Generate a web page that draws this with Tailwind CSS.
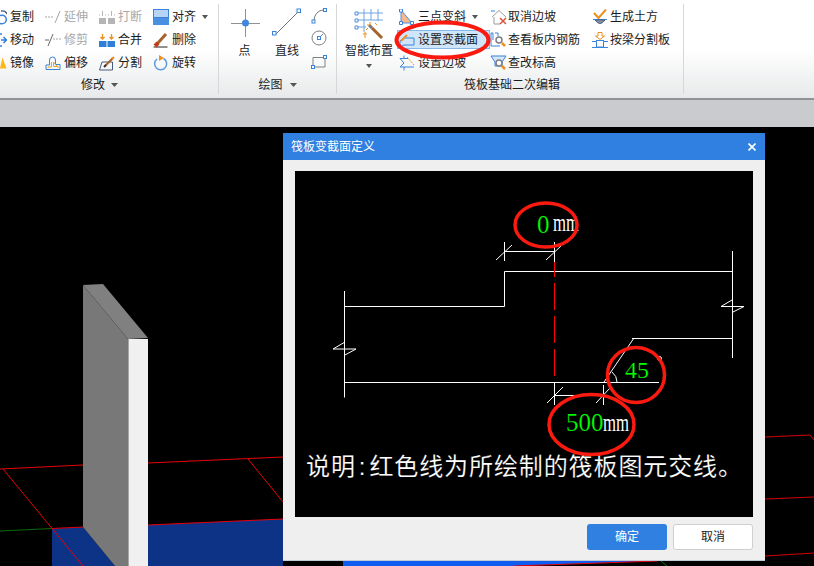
<!DOCTYPE html>
<html lang="en">
  <head>
    <meta charset="UTF-8" />
    <title>筏板变截面定义</title>
    <script src="https://cdn.jsdelivr.net/npm/@tailwindcss/browser@4"></script>
  </head>
  <body class="w-[814px] h-[566px] overflow-hidden bg-black font-['Liberation_Sans','Noto_Sans_CJK_SC',sans-serif] text-[12px] text-[#1c1c1c]">
    <div class="relative w-[814px] h-[566px] overflow-hidden flex flex-col">
      <!-- ribbon -->
      <div class="h-[100px] shrink-0 flex border-b-2 border-[#8f9296] bg-gradient-to-b from-white via-white to-[#e7e9ea]">
        <!-- 修改 -->
        <div class="w-[219px] shrink-0 border-r border-[#d5d7d9] my-1 flex flex-col overflow-hidden">
          <div class="h-[74px] pt-px grid grid-cols-[54px_54px_54px_70px] grid-rows-[23px_23px_23px] -ml-[9px] whitespace-nowrap">
            <div class="flex items-center gap-[3px]">
              <svg class="w-4 h-4 shrink-0" viewBox="0 0 16 16" fill="none"><path d="M10 2a5 5 0 0 1 6 3" stroke="#3d5d86" stroke-width="1.3"/><circle cx="11" cy="10.5" r="4.3" stroke="#3a83d8" stroke-width="1.5"/></svg>复制
            </div>
            <div class="flex items-center gap-[3px] text-[#a8a8a8]">
              <svg class="w-4 h-4 shrink-0" viewBox="0 0 16 16" fill="none"><path d="M0 8h9" stroke="#a5a5a5" stroke-dasharray="2 1"/><path d="M10 14 15 2" stroke="#a5a5a5"/></svg>延伸
            </div>
            <div class="flex items-center gap-[3px] text-[#a8a8a8]">
              <svg class="w-4 h-4 shrink-0" viewBox="0 0 16 16" fill="#b5b5b5"><rect x="0" y="9" width="7" height="6"/><rect x="9" y="9" width="7" height="6"/><path d="M3.5 2v5M12.5 2v5M0 6h1M6 6h1M9 6h1M15 6h1" stroke="#b5b5b5"/></svg>打断
            </div>
            <div class="flex items-center gap-[3px]">
              <svg class="w-4 h-4 shrink-0" viewBox="0 0 16 16"><rect x="0.5" y="0.5" width="15" height="8" fill="#b8d4f4" stroke="#3a83d8"/><rect x="0" y="9" width="16" height="7" fill="#4a90e2"/></svg>对齐
              <svg class="w-[6px] h-1 ml-[3px]" viewBox="0 0 6 4"><path d="M0 0H6L3 4z" fill="#555"/></svg>
            </div>

            <div class="flex items-center gap-[3px]">
              <svg class="w-4 h-4 shrink-0" viewBox="0 0 16 16" fill="none" stroke="#2f7ed8" stroke-width="1.5"><path d="M10 8h5M12.5 5l3 3-3 3M9 2h2M9 14h2"/></svg>移动
            </div>
            <div class="flex items-center gap-[3px] text-[#a8a8a8]">
              <svg class="w-4 h-4 shrink-0" viewBox="0 0 16 16" fill="none"><path d="M0 8h4M3 14 8 2" stroke="#666"/><path d="M8 7h8" stroke="#a5a5a5" stroke-dasharray="2 1"/></svg>修剪
            </div>
            <div class="flex items-center gap-[3px]">
              <svg class="w-4 h-4 shrink-0" viewBox="0 0 16 16"><rect x="0" y="9" width="7.5" height="6" fill="#2f7ed8"/><rect x="8.5" y="9" width="7.5" height="6" fill="#2f7ed8"/><path d="M3.5 2v5M1.5 5l2 2 2-2M12.5 2v5M10.5 5l2 2 2-2" stroke="#ef8f1d" fill="none" stroke-width="1.3"/></svg>合并
            </div>
            <div class="flex items-center gap-[3px]">
              <svg class="w-4 h-4 shrink-0" viewBox="0 0 16 16" fill="none"><path d="M14.5 15H0.5" stroke="#222"/><path d="M4 12 13 2" stroke="#a4622c" stroke-width="3"/><path d="M2 14 5 11" stroke="#c33c16" stroke-width="4"/></svg>删除
            </div>

            <div class="flex items-center gap-[3px]">
              <svg class="w-4 h-4 shrink-0" viewBox="0 0 16 16"><path d="M11.5 2.5 15.5 13.5H9z" fill="#fdb813"/></svg>镜像
            </div>
            <div class="flex items-center gap-[3px]">
              <svg class="w-4 h-4 shrink-0" viewBox="0 0 16 16" fill="none"><path d="M1 14.5V10H4.5V5a3 3 0 0 1 6 0V9.5H15v5z" stroke="#3a83d8"/><path d="M3 12.5V12H6.5V7M8.500 7V11.500H13v1z" stroke="#f2a51f"/></svg>偏移
            </div>
            <div class="flex items-center gap-[3px]">
              <svg class="w-4 h-4 shrink-0" viewBox="0 0 16 16" fill="none"><path d="M0.5 15 3 7H13.5V15z" stroke="#4a5a80"/><path d="M6 11 14 3" stroke="#a4622c" stroke-width="2"/><path d="M5 12 7 10" stroke="#333" stroke-width="2"/><path d="M13 4 15 2" stroke="#ef8f1d" stroke-width="2"/></svg>分割
            </div>
            <div class="flex items-center gap-[3px]">
              <svg class="w-4 h-4 shrink-0" viewBox="0 0 16 16" fill="none"><path d="M10.5 3.5A6 6 0 1 1 4 4" stroke="#5a9be0" stroke-width="1.5"/><path d="M6 0 11 3 6 6z" fill="#ef8f1d"/></svg>旋转
            </div>
          </div>
          <div class="h-[18px] flex items-center justify-center gap-[6px] pr-[19px]">修改<svg class="w-[7px] h-1" viewBox="0 0 7 4"><path d="M0 0H7L3.5 4z" fill="#555"/></svg></div>
        </div>

        <!-- 绘图 -->
        <div class="w-[118px] shrink-0 border-r border-[#d5d7d9] my-1 flex flex-col">
          <div class="h-[74px] flex whitespace-nowrap">
            <div class="w-[51px] flex flex-col items-center pt-1">
              <svg class="w-[30px] h-[30px] mb-1" viewBox="0 0 30 30" fill="none"><path d="M15.5 1V29M1 15.5H30" stroke="#8d9298"/><circle cx="15.5" cy="15" r="3.5" fill="#3f88dc"/></svg>
              点
            </div>
            <div class="w-[34px] flex flex-col items-center pt-1">
              <svg class="w-[30px] h-[30px] mb-1" viewBox="0 0 30 30" fill="none"><path d="M4 26 26 4" stroke="#6f7378"/><rect x="0.5" y="23.5" width="3.5" height="3.5" fill="#fff" stroke="#3a83d8"/><rect x="25" y="1" width="3.5" height="3.5" fill="#fff" stroke="#3a83d8"/></svg>
              直线
            </div>
            <div class="pl-[7px] flex flex-col pt-[4px] gap-[6px]">
              <svg class="w-4 h-4" viewBox="0 0 16 16" fill="none"><path d="M3 13C3 7 7 2 13 2" stroke="#6f7378"/><rect x="1" y="12" width="3" height="3" fill="#fff" stroke="#3a83d8"/><rect x="12.5" y="0.5" width="3" height="3" fill="#fff" stroke="#3a83d8"/></svg>
              <svg class="w-4 h-4" viewBox="0 0 16 16" fill="none"><circle cx="8" cy="8" r="7" stroke="#7c8086"/><path d="M8 8 12 4" stroke="#7c8086"/><rect x="6.5" y="6.5" width="3" height="3" fill="#fff" stroke="#3a83d8"/></svg>
              <svg class="w-4 h-4 mt-[1px]" viewBox="0 0 16 16" fill="none"><path d="M2 4.5H14V14H2z" stroke="#7c8086"/><rect x="0.5" y="12.5" width="3" height="3" fill="#fff" stroke="#3a83d8"/><rect x="12.5" y="2.5" width="3" height="3" fill="#fff" stroke="#3a83d8"/></svg>
            </div>
          </div>
          <div class="h-[18px] flex items-center justify-center gap-[7px]">绘图<svg class="w-[7px] h-1" viewBox="0 0 7 4"><path d="M0 0H7L3.5 4z" fill="#555"/></svg></div>
        </div>

        <!-- 筏板基础二次编辑 -->
        <div class="w-[347px] shrink-0 border-r border-[#d5d7d9] my-1 flex flex-col">
          <div class="h-[74px] flex whitespace-nowrap">
            <div class="ml-2 w-12 flex flex-col items-center pt-1">
              <svg class="w-[30px] h-8 mb-[2px]" viewBox="0 0 30 32" fill="none"><path d="M10 1V24M17 1V12M24 1V13M3 5H29M3 12H29M3 19H12" stroke="#6ea3e2"/><path d="M1 4h3v3H1zM1 11h3v3H1zM1 18h3v3H1z" fill="#fff" stroke="#4e8fdc"/><path d="M18 20 28 30" stroke="#a4622c" stroke-width="3"/><path d="M18 20 15 17" stroke="#777" stroke-width="3"/><path d="M16 14v3M13 17h3M21 15l2 2M12 22l2-2" stroke="#ef8f1d"/><path d="M9 26h4M11 24v6" stroke="#ef8f1d"/></svg>
              智能布置
              <svg class="w-[6px] h-1 mt-1" viewBox="0 0 6 4"><path d="M0 0H6L3 4z" fill="#555"/></svg>
            </div>
            <div class="ml-1 w-[93px] pt-px flex flex-col">
              <div class="h-[23px] flex items-center gap-[3px] pl-[2px]">
                <svg class="w-4 h-4 shrink-0" viewBox="0 0 16 16"><path d="M2 1V14H13z" fill="#f6b98a" stroke="#4e8fdc"/><path d="M0.5 0h3v3h-3zM0.5 12.5h3v3h-3zM11.5 12.5h3v3h-3z" fill="#fff" stroke="#3a83d8"/></svg>三点变斜
                <svg class="w-[6px] h-1 ml-[3px]" viewBox="0 0 6 4"><path d="M0 0H6L3 4z" fill="#555"/></svg>
              </div>
              <div class="h-[19px] my-[2px] flex items-center gap-[3px] pl-[1px] bg-[#cfe5f9] border border-[#85b9ea]">
                <svg class="w-4 h-4 shrink-0" viewBox="0 0 16 16" fill="none"><path d="M1 9 5 6H15V13H5L1 15z" stroke="#3a83d8"/><path d="M2 9 8 3" stroke="#ef8f1d" stroke-width="2"/></svg>设置变截面
              </div>
              <div class="h-[23px] flex items-center gap-[3px] pl-[2px]">
                <svg class="w-4 h-4 shrink-0" viewBox="0 0 16 16" fill="none"><path d="M5 0.5V3.5H1L5 8 1 12H5V15.5M5 3.5H9M5 12H15" stroke="#3a83d8"/><path d="M8 2 15 10" stroke="#ef8f1d" stroke-dasharray="2 1"/></svg>设置边坡
              </div>
            </div>
            <div class="w-[102px] pt-px flex flex-col">
              <div class="h-[23px] flex items-center gap-[1px]">
                <svg class="w-[17px] h-4 shrink-0" viewBox="0 0 17 16" fill="none"><path d="M2 8 9 1.5 16 8M4 8V15H10" stroke="#9a9a9a"/><path d="M1 2H5" stroke="#3a83d8"/><path d="M10 9 16 15M16 9 10 15" stroke="#d9533f" stroke-width="1.5"/></svg>取消边坡
              </div>
              <div class="h-[23px] flex items-center gap-[1px]">
                <svg class="w-[17px] h-4 shrink-0" viewBox="0 0 17 16" fill="none"><path d="M1 1H3V8M1 1V14H10" stroke="#3a83d8"/><path d="M5 1H8V4" stroke="#3a83d8"/><circle cx="9" cy="8" r="3" stroke="#7c8086" stroke-width="1.5"/><path d="M12 11 15 14" stroke="#ef8f1d" stroke-width="2.5"/></svg>查看板内钢筋
              </div>
              <div class="h-[23px] flex items-center gap-[1px]">
                <svg class="w-[17px] h-4 shrink-0" viewBox="0 0 17 16" fill="none"><path d="M1 1H16L12 7V11H5V7z" fill="#d6e7f8" stroke="#3a83d8"/><circle cx="9" cy="8" r="3" fill="#fff" stroke="#7c8086" stroke-width="1.5"/><path d="M12 11 15 14" stroke="#ef8f1d" stroke-width="2.5"/></svg>查改标高
              </div>
            </div>
            <div class="flex flex-col pt-px">
              <div class="h-[23px] flex items-center gap-[2px]">
                <svg class="w-4 h-4 shrink-0" viewBox="0 0 16 16" fill="none"><path d="M2 4 6.5 9 14 0.5" stroke="#ef8f1d" stroke-width="2"/><path d="M1 10.5H15" stroke="#3a83d8"/><path d="M3 11Q8 18 13 11z" fill="#8a94a3" stroke="#4a5a80"/></svg>生成土方
              </div>
              <div class="h-[23px] flex items-center gap-[2px]">
                <svg class="w-4 h-4 shrink-0" viewBox="0 0 16 16" fill="none"><path d="M6 0.5H10V4H12.5L8 7.5 3.5 4H6z" stroke="#ef8f1d"/><rect x="4.5" y="8.5" width="7" height="6.5" stroke="#3a83d8"/><path d="M0 9.5H4M12 9.5H16M0 15.5H16" stroke="#3a83d8"/></svg>按梁分割板
              </div>
            </div>
          </div>
          <div class="h-[18px] flex items-center justify-center pl-1">筏板基础二次编辑</div>
        </div>
      </div>
      <div class="h-[27px] shrink-0 bg-[#c9cbce]"></div>

      <!-- 3d view -->
      <div class="flex-1 bg-black">
        <svg class="w-[814px] h-[439px]" viewBox="0 127 814 439" fill="none">
          <path d="M52 529 83 527 115 566H52zM148 525 283 519V566H148z" fill="#0d3386"/>
          <path d="M0 531 52 528.5" stroke="#0a6a0a"/>
          <path d="M0 469 83 465M148 463 283 457M3 469 83 566M248 459 283 502M52 528.5 83 527M148 525 283 519" stroke="#e8000a"/>
          <path d="M765 437 810 435 814 440M765 499 814 497M765 556 814 553" stroke="#d4000a"/>
          <path d="M83 285V527L115 566H128V339z" fill="#787878"/>
          <path d="M83 285 103 284 148 338 128 339z" fill="#808080"/>
          <path d="M128 339H148V566H128z" fill="#f0f0f0"/>
          <path d="M128.500 339V566" stroke="#a8a8a8"/>
          <path d="M343 561H657L514 566H343z" fill="#0f5cf0"/>
          <path d="M514 566 657 561" stroke="#e8000a"/>
          <path d="M661 561 667 566" stroke="#0a7a0a"/>
        </svg>
      </div>

      <!-- dialog -->
      <div class="absolute left-[283px] top-[133px] w-[482px] h-[428px] flex flex-col bg-[#efefef] border-b border-[#c3c9d6]">
        <div class="h-[27px] shrink-0 bg-[#2f80e0] text-white flex items-center justify-between pl-2 pr-[9px]">
          <span>筏板变截面定义</span>
          <svg class="w-2 h-2" viewBox="0 0 8 8"><path d="M0.500 0.500 7.500 7.500M7.500 0.500 0.500 7.500" stroke="#fff" stroke-width="1.6"/></svg>
        </div>
        <div class="flex-1 pt-[11px] px-3">
          <svg class="block w-[458px] h-[346px] bg-black" viewBox="295 171 458 346" fill="none">
            <g stroke="#fff">
              <path d="M344.500 291V397.500M344.500 306.500H504.500V271.500H732.500M732.500 251V358M632 338.500H732.500M345 382.500H659"/>
              <path d="M504.500 251.500H554.500M504.500 242V261M554.500 242V262M496 260 512 245M546 260 561 246"/>
              <path d="M554.500 383V405M603.500 385V405M554.500 395.500H603.500M547 403 563 387M596 403 610 388"/>
              <path d="M604 382 634 338M612 372Q617 376 617 382"/>
              <path d="M333 349H356M333 349 345 342M345 355 356 349M721 306.500H744M721 306.500 732 300M733 312 744 306.500"/>
              <circle cx="659.500" cy="358.500" r="2"/>
            </g>
            <path d="M554.500 262V382" stroke="#f00" stroke-dasharray="27 6" stroke-dashoffset="12"/>
            <g class="font-['Liberation_Serif',serif]" font-size="25" stroke="#000" stroke-width="0.200">
              <text x="537" y="233" fill="#00ff00">0</text>
              <text x="625" y="378" fill="#00ff00" font-size="24">45</text>
              <text x="566" y="431" fill="#00ff00">500</text>
              <text x="553" y="231" fill="#fff" font-size="26" stroke="none" textLength="26" lengthAdjust="spacingAndGlyphs">mm</text>
              <text x="603" y="431" fill="#fff" font-size="26" stroke="none" textLength="26" lengthAdjust="spacingAndGlyphs">mm</text>
            </g>
            <text x="306" y="475" fill="#fff" stroke="#000" stroke-width="0.150" font-size="24" letter-spacing="0.900">说明<tspan dx="3">:</tspan><tspan dx="3">红色线为所绘制的筏板图元交线。</tspan></text>
            <g stroke="#fa1a10" stroke-width="3.500">
              <ellipse cx="546" cy="225" rx="31" ry="22"/>
              <ellipse cx="636" cy="375" rx="28.500" ry="27.500"/>
              <ellipse cx="591.500" cy="424.500" rx="42.500" ry="30"/>
            </g>
          </svg>
          <div class="mt-[7px] flex justify-end gap-[6px]">
            <button class="w-20 h-[26px] rounded-[3px] bg-[#2f80e0] text-white">确定</button>
            <button class="w-20 h-[26px] rounded-[3px] bg-white border border-[#cfcfcf]">取消</button>
          </div>
        </div>
      </div>

      <!-- hand-drawn mark on the ribbon -->
      <svg class="absolute left-0 top-0 w-[814px] h-[100px] pointer-events-none" viewBox="0 0 814 100" fill="none">
        <ellipse cx="442.500" cy="40" rx="46" ry="17.500" stroke="#fa1a10" stroke-width="4"/>
      </svg>
    </div>
  </body>
</html>
